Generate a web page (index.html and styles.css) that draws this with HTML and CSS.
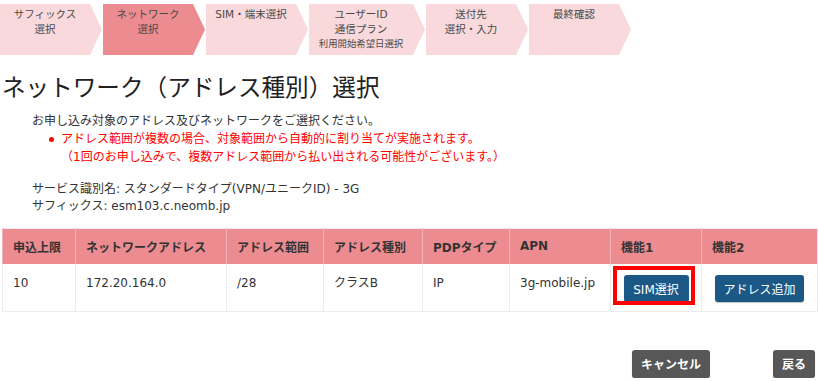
FILE: index.html
```html
<!DOCTYPE html>
<html lang="ja">
<head>
    <meta charset="UTF-8">
    <meta name="viewport" content="width=device-width, initial-scale=1.0">
    <title>ネットワーク（アドレス種別）選択</title>
    <link rel="stylesheet" href="styles.css">
</head>
<body>
    <div class="steps">
        <div class="step">サフィックス<br>選択</div>
        <div class="step step-active">ネットワーク<br>選択</div>
        <div class="step">SIM・端末選択</div>
        <div class="step step-wide">ユーザーID<br>通信プラン<br><span class="step-small">利用開始希望日選択</span></div>
        <div class="step">送付先<br>選択・入力</div>
        <div class="step">最終確認</div>
    </div>

    <h1>ネットワーク（アドレス種別）選択</h1>

    <div class="intro">
        <p>お申し込み対象のアドレス及びネットワークをご選択ください。</p>
        <ul class="notes">
            <li>アドレス範囲が複数の場合、対象範囲から自動的に割り当てが実施されます。<br>（1回のお申し込みで、複数アドレス範囲から払い出される可能性がございます。）</li>
        </ul>
    </div>

    <div class="service">
        <p>サービス識別名: スタンダードタイプ(VPN/ユニークID) - 3G</p>
        <p>サフィックス: esm103.c.neomb.jp</p>
    </div>

    <table class="network-table">
        <thead>
            <tr>
                <th class="col-limit">申込上限</th>
                <th class="col-net">ネットワークアドレス</th>
                <th class="col-range">アドレス範囲</th>
                <th class="col-type">アドレス種別</th>
                <th class="col-pdp">PDPタイプ</th>
                <th class="col-apn">APN</th>
                <th class="col-f1">機能1</th>
                <th class="col-f2">機能2</th>
            </tr>
        </thead>
        <tbody>
            <tr>
                <td>10</td>
                <td>172.20.164.0</td>
                <td>/28</td>
                <td>クラスB</td>
                <td>IP</td>
                <td>3g-mobile.jp</td>
                <td class="cell-action">
                    <span class="marker"></span>
                    <button type="button" class="btn btn-blue btn-sim">SIM選択</button>
                </td>
                <td class="cell-action">
                    <button type="button" class="btn btn-blue btn-add">アドレス追加</button>
                </td>
            </tr>
        </tbody>
    </table>

    <div class="footer-buttons">
        <button type="button" class="btn btn-gray btn-cancel">キャンセル</button>
        <button type="button" class="btn btn-gray btn-back">戻る</button>
    </div>
</body>
</html>
```

FILE: styles.css
```css
body {
    margin: 0;
    font-family: "DejaVu Sans", "Noto Sans CJK JP", sans-serif;
    font-size: 12px;
    color: #333;
    background-color: #fff;
}

p {
    margin: 0;
}

/* progress steps */
.steps {
    display: flex;
    gap: 1px;
    margin-top: 4px;
}

.step {
    box-sizing: border-box;
    width: 102px;
    height: 51px;
    padding: 3px 12px 0 0;
    background-color: #f9d9db;
    color: #4a4a4a;
    font-size: 10.5px;
    line-height: 14.5px;
    text-align: center;
    clip-path: polygon(0 0, calc(100% - 12px) 0, 100% 50%, calc(100% - 12px) 100%, 0 100%);
}

.step-active {
    background-color: #ec8b90;
}

.step-wide {
    width: 116px;
}

.step-small {
    font-size: 9.4px;
}

h1 {
    margin: 16px 0 0 2px;
    font-family: "Noto Sans CJK JP", sans-serif;
    font-size: 23.6px;
    line-height: 30px;
    font-weight: normal;
    color: #222;
}

.intro {
    margin-top: 11px;
    padding-left: 32px;
    line-height: 18px;
}

.notes {
    margin: 0;
    padding-left: 29px;
    color: #ff0000;
    list-style: none;
}

.notes li {
    position: relative;
}

.notes li::before {
    content: "";
    position: absolute;
    left: -12px;
    top: 7px;
    width: 5px;
    height: 5px;
    border-radius: 50%;
    background-color: #ff0000;
}

.service {
    margin-top: 15px;
    padding-left: 32px;
    line-height: 17px;
}

/* table */
.network-table {
    width: 816px;
    margin: 13px 0 0 2px;
    border-collapse: collapse;
    border: 1px solid #ececec;
}

.network-table th {
    height: 35px;
    box-sizing: border-box;
    padding: 0 10px;
    background-color: #ec8b90;
    border-left: 1px solid #f3b4b7;
    text-align: left;
    font-weight: bold;
    color: #333;
}

.network-table td {
    padding: 11px 10px 9px;
    border-left: 1px solid #ececec;
    vertical-align: top;
    line-height: 17px;
}

.col-limit { width: 73px; }
.col-net { width: 151px; }
.col-range { width: 97px; }
.col-type { width: 99px; }
.col-pdp { width: 87px; }
.col-apn { width: 101px; }
.col-f1 { width: 91px; }

.network-table td.cell-action {
    position: relative;
    padding-left: 0;
    padding-right: 0;
    text-align: center;
}

.marker {
    position: absolute;
    left: 2px;
    top: 2px;
    width: 74px;
    height: 31px;
    border: 4px solid #ff0000;
}

/* buttons */
.btn {
    height: 27px;
    padding: 0;
    border: none;
    border-radius: 3px;
    color: #fff;
    font-family: "DejaVu Sans", "Noto Sans CJK JP", sans-serif;
    font-size: 12px;
    box-shadow: 0 1px 1px rgba(0, 0, 0, 0.25);
}

.btn-blue {
    background-color: #1b5886;
}

.btn-sim {
    width: 65px;
}

.btn-add {
    width: 89px;
}

.btn-gray {
    height: 28px;
    background-color: #575757;
    font-weight: bold;
}

.btn-cancel {
    width: 78px;
}

.btn-back {
    width: 42px;
}

.footer-buttons {
    display: flex;
    justify-content: flex-end;
    gap: 63px;
    margin-top: 38px;
    padding-right: 4px;
}
```
